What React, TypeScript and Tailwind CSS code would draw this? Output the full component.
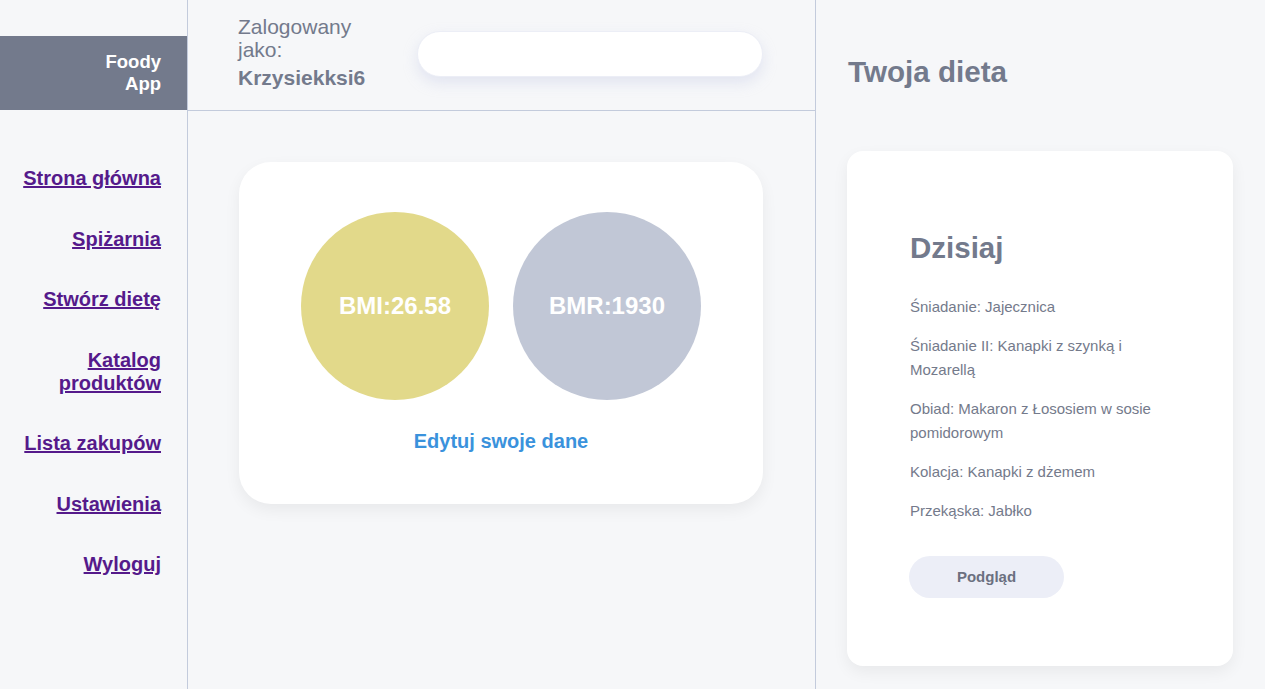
import React from 'react';

const navItems = ['Strona główna', 'Spiżarnia', 'Stwórz dietę', 'Katalog produktów', 'Lista zakupów', 'Ustawienia', 'Wyloguj'];

const meals = [
    'Śniadanie: Jajecznica',
    'Śniadanie II: Kanapki z szynką i Mozarellą',
    'Obiad: Makaron z Łososiem w sosie pomidorowym',
    'Kolacja: Kanapki z dżemem',
    'Przekąska: Jabłko',
];

const Sidebar = () => (
    <aside className="w-[188px] shrink-0 border-r border-[#c3cbdc] pt-[36px]">
        <div className="h-[74px] bg-[#737a8c] flex flex-col justify-center items-end pr-[26px] text-right">
            <span className="text-white font-bold text-[18.5px] leading-[22px]">Foody</span>
            <span className="text-white font-bold text-[18.5px] leading-[22px]">App</span>
        </div>
        <nav className="mt-[57px] flex flex-col items-end gap-[37.5px] pr-[26px]">
            {navItems.map((item) => (
                <a
                    key={item}
                    href="#"
                    className="text-right text-[20px] leading-[23px] font-bold text-[#551a8b] underline max-w-[140px]"
                >
                    {item}
                </a>
            ))}
        </nav>
    </aside>
);

const MainPanel = () => (
    <main className="w-[628px] shrink-0 border-r border-[#c3cbdc]">
        <header className="h-[111px] border-b border-[#c3cbdc] flex items-start pl-[50px]">
            <div className="w-[130px] pt-[15px] text-[#737a8c] text-[21px]">
                <p className="leading-[23px]">Zalogowany jako:</p>
                <p className="leading-[23px] mt-[5px] font-bold">Krzysiekksi6</p>
            </div>
            <input
                type="text"
                className="ml-[49px] mt-[31px] w-[346px] h-[46px] rounded-full bg-white border border-[#eceef6] shadow-[0_6px_14px_rgba(190,196,225,0.35)] outline-none"
            />
        </header>
        <div className="ml-[51px] mt-[51px] w-[524px] h-[342px] bg-white rounded-[32px] shadow-[0_6px_16px_rgba(0,0,0,0.06)] flex flex-col items-center pt-[50px]">
            <div className="flex gap-[24px]">
                <div className="w-[188px] h-[188px] rounded-full bg-[#e2d98a] flex items-center justify-center">
                    <span className="text-white font-bold text-[24px]">BMI:26.58</span>
                </div>
                <div className="w-[188px] h-[188px] rounded-full bg-[#c1c7d6] flex items-center justify-center">
                    <span className="text-white font-bold text-[24px]">BMR:1930</span>
                </div>
            </div>
            <a href="#" className="mt-[30px] text-[20px] leading-[23px] font-bold text-[#3a92dc]">
                Edytuj swoje dane
            </a>
        </div>
    </main>
);

const DietPanel = () => (
    <section className="flex-1 pl-[31px] pr-[32px] pt-[55px]">
        <h2 className="text-[29.6px] leading-[33px] font-bold text-[#737a8c] pl-[1px]">Twoja dieta</h2>
        <div className="mt-[63px] h-[515px] bg-white rounded-[16px] shadow-[0_6px_16px_rgba(0,0,0,0.06)] pl-[62px] pr-[64px] pt-[80px]">
            <h3 className="text-[29.5px] leading-[33px] font-bold text-[#737a8c] pl-[1px]">Dzisiaj</h3>
            <div className="mt-[31px] flex flex-col gap-[15px] pl-[1px]">
                {meals.map((m) => (
                    <p key={m} className="text-[15px] leading-[24px] text-[#747a8b]">
                        {m}
                    </p>
                ))}
            </div>
            <button className="mt-[33px] w-[155px] h-[42px] rounded-full bg-[#eceef7] text-[15px] font-bold text-[#6b7080]">
                Podgląd
            </button>
        </div>
    </section>
);

const App = () => {
    return (
        <div className="flex h-[689px] bg-[#f6f7f9] overflow-hidden font-['Liberation_Sans',Arial,sans-serif]">
            <Sidebar />
            <MainPanel />
            <DietPanel />
        </div>
    );
};

export default App;
